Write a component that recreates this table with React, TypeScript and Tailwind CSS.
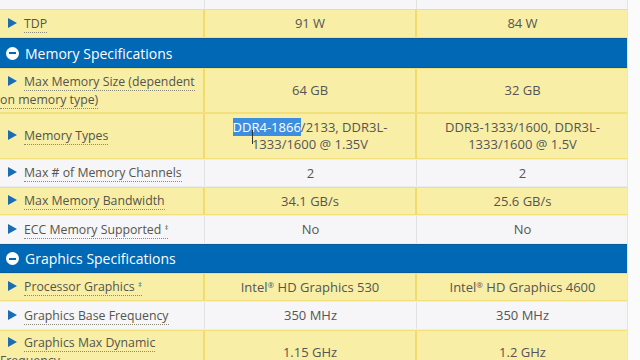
import React from 'react';

type Row =
    | { kind: 'head'; title: string; h: string }
    | { kind: 'row'; label: React.ReactNode; a: React.ReactNode; b: React.ReactNode; yellow: boolean; h: string };

const Tri = () => (
    <svg width="9" height="10" viewBox="0 0 9 10" className="inline-block ml-[8px] mr-[7px] align-[0px]">
        <path d="M0 0 L9 5 L0 10 Z" fill="#1b6db3" />
    </svg>
);

const Label = ({ children }: { children: React.ReactNode }) => (
    <span className="border-b border-dotted border-[#8a8a7a]">{children}</span>
);

const rows: Row[] = [
    { kind: 'row', label: 'TDP', a: '91 W', b: '84 W', yellow: true, h: 'h-[29px]' },
    { kind: 'head', title: 'Memory Specifications', h: 'h-[30px]' },
    { kind: 'row', label: 'Max Memory Size (dependent on memory type)', a: '64 GB', b: '32 GB', yellow: true, h: 'h-[45px]' },
    {
        kind: 'row',
        label: 'Memory Types',
        a: (
            <>
                <span className="bg-[#3d8ee0] text-white">DDR4-1866</span>/2133, DDR3L-
                <br />
                1333/1600 @ 1.35V
            </>
        ),
        b: (
            <>
                DDR3-1333/1600, DDR3L-
                <br />
                1333/1600 @ 1.5V
            </>
        ),
        yellow: true,
        h: 'h-[46px]',
    },
    { kind: 'row', label: 'Max # of Memory Channels', a: '2', b: '2', yellow: false, h: 'h-[28px]' },
    { kind: 'row', label: 'Max Memory Bandwidth', a: '34.1 GB/s', b: '25.6 GB/s', yellow: true, h: 'h-[28px]' },
    { kind: 'row', label: <>ECC Memory Supported <sup className="text-[8px]">‡</sup></>, a: 'No', b: 'No', yellow: false, h: 'h-[29px]' },
    { kind: 'head', title: 'Graphics Specifications', h: 'h-[29px]' },
    {
        kind: 'row',
        label: <>Processor Graphics <sup className="text-[8px]">‡</sup></>,
        a: <>Intel<sup className="text-[8px]">®</sup> HD Graphics 530</>,
        b: <>Intel<sup className="text-[8px]">®</sup> HD Graphics 4600</>,
        yellow: true,
        h: 'h-[28px]',
    },
    { kind: 'row', label: 'Graphics Base Frequency', a: '350 MHz', b: '350 MHz', yellow: false, h: 'h-[29px]' },
    { kind: 'row', label: 'Graphics Max Dynamic Frequency', a: '1.15 GHz', b: '1.2 GHz', yellow: true, h: 'h-[44px]' },
];

export default function App() {
    return (
        <div
            className="w-[640px] h-[360px] overflow-hidden bg-[#fbfbfb] text-[13px] text-[#555555]"
            style={{ fontFamily: '"Open Sans", "Noto Sans", sans-serif' }}
        >
            <div className="w-[628px] border-r border-[#e4e4e4]">
                {/* previous row, cut off */}
                <div className="h-[9px] grid grid-cols-[205px_212px_211px] bg-[#f6f6f8]">
                    <div className="border-r border-[#e2e2e2]" />
                    <div className="border-r border-[#e2e2e2]" />
                    <div />
                </div>
                {rows.map((r, i) =>
                    r.kind === 'head' ? (
                        <div key={i} className={`${r.h} bg-[#0068b5] flex items-center text-white text-[14px] border-y border-[#0a5a9a]`}>
                            <span className="ml-[6px] mr-[6px] w-[13px] h-[13px] rounded-full bg-white flex items-center justify-center">
                                <span className="w-[7px] h-[2px] bg-[#0068b5]" />
                            </span>
                            {r.title}
                        </div>
                    ) : (
                        <div
                            key={i}
                            className={`${r.h} grid grid-cols-[205px_212px_211px] ${
                                r.yellow ? 'bg-[#f8eea6] border-y border-[#f2e07a]' : 'bg-[#f6f6f8] border-y border-[#ececec]'
                            }`}
                        >
                            <div
                                className={`flex items-center pr-1 text-[12.3px] leading-[18px] text-[#55554a] ${
                                    r.yellow ? 'border-r-2 border-[#f0dc6e]' : 'border-r border-[#e2e2e2]'
                                }`}
                            >
                                <div>
                                    <Tri />
                                    <Label>{r.label}</Label>
                                </div>
                            </div>
                            <div
                                className={`flex items-center justify-center text-center leading-[17px] ${
                                    r.yellow ? 'border-r-2 border-[#f0dc6e]' : 'border-r border-[#e2e2e2]'
                                }`}
                            >
                                <div className="relative">
                                    {r.a}
                                    {i === 3 && (
                                        <span className="absolute left-[19px] top-[11px] w-[1px] h-[14px] bg-[#333]" />
                                    )}
                                </div>
                            </div>
                            <div className="flex items-center justify-center text-center leading-[17px]">
                                <div>{r.b}</div>
                            </div>
                        </div>
                    )
                )}
            </div>
        </div>
    );
}
